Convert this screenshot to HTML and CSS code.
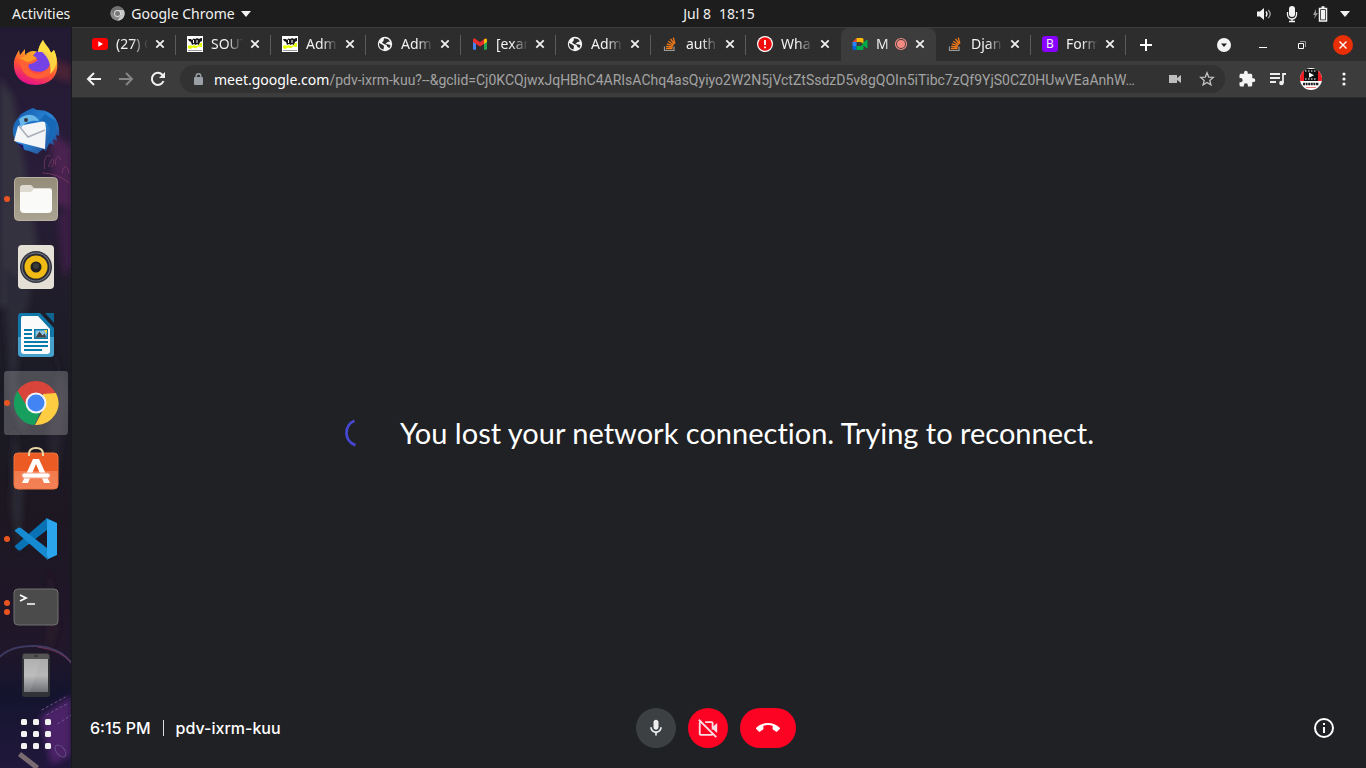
FILE: index.html
```html
<!DOCTYPE html>
<html lang="en">
<head>
<meta charset="utf-8">
<title>Meet - pdv-ixrm-kuu</title>
<link rel="stylesheet" href="styles.css">
</head>
<body>
<svg class="defs" aria-hidden="true">
  <symbol id="close" viewBox="0 0 16 16"><path d="M4.300 4.300l7.400 7.400M11.700 4.300l-7.400 7.400" stroke="#f1f1f1" stroke-width="1.800"/></symbol>
  <symbol id="globe" viewBox="0 0 16 16"><circle cx="8" cy="8" r="7.200" fill="#f4f4f4"/><path d="M2 7l3 1.500L7 10l-.5 3.500C3.500 13 1.800 10.500 2 7zM7 2.200L11 3l2 2.500-2.500.5L8.500 8l3.500.500 1.500 1-1 2.500-2-1-1-2-2.500-1L5 6.500 6.500 5z" fill="#2d2d2d"/></symbol>
  <symbol id="stamp" viewBox="0 0 16 16"><path d="M0 0h16v16H0z" fill="#fff"/><path d="M1 3h3l1 1 1.500-1.500 2 .5 1.500-1 2 1L14 2h1v3l-2 1-1 3-2-1-1 1-2-1-2 1-1-3-2-1z" fill="#181818"/><path d="M6.500 4v3M10 4v3" stroke="#fff"/><path d="M1 10l2-1 2 1 2-1 2 1 3-1 1-2h2v4l-4-.5-2 2-3-1-3 1.500-2-1z" fill="#e6ff00"/><path d="M1 14.500h14" stroke="#999"/></symbol>
  <symbol id="stack" viewBox="0 0 16 16"><path d="M2.500 10.500v4h9.500v-4" fill="none" stroke="#9b9b9b" stroke-width="1.200"/><path d="M4 12.500h6.500M4.200 10.300l6.500.7M4.800 7.800l6.200 1.900M6.200 5.200l5.400 3.600M8.500 3l4 5M11.300 1.700l1.600 6" stroke="#f47b16" stroke-width="1.300"/></symbol>
  <symbol id="mic" viewBox="0 0 24 24"><path d="M12 14c1.660 0 3-1.340 3-3V5c0-1.660-1.340-3-3-3S9 3.340 9 5v6c0 1.660 1.340 3 3 3zm5-3c0 2.760-2.240 5-5 5s-5-2.240-5-5H5c0 3.530 2.610 6.430 6 6.920V21h2v-3.080c3.390-.49 6-3.390 6-6.920h-2z" fill="#eee"/></symbol>
</svg>

<header class="topbar">
  <div class="topbar-left">
    <button class="menu">Activities</button>
    <button class="menu app-menu">
      <svg width="15" height="15" viewBox="0 0 48 48"><circle cx="24" cy="24" r="23" fill="#888"/><path d="M24 13h20a23 23 0 0 1-20 34l10-17z" fill="#c8c8c8"/><path d="M4 13a23 23 0 0 1 40 0H24L14 29z" fill="#707070"/><circle cx="24" cy="24" r="11" fill="#ddd"/><circle cx="24" cy="24" r="8" fill="#777"/></svg>
      Google Chrome
      <svg width="10" height="6"><path d="M0 0h10L5 6z" fill="#f2f2f2"/></svg>
    </button>
  </div>
  <button class="menu clock"><span>Jul 8</span><span>18:15</span></button>
  <button class="menu status" aria-label="System menu">
    <svg width="16" height="16" viewBox="0 0 16 16"><path d="M1 5.500h3L8 2v12l-4-3.500H1z" fill="#f2f2f2"/><path d="M10 5.500q2 2.500 0 5" fill="none" stroke="#f2f2f2" stroke-width="1.300"/><path d="M12.200 3.800q4 4.200 0 8.400" fill="none" stroke="#aaa" stroke-width="1.200"/></svg>
    <svg width="16" height="18" viewBox="0 0 16 18"><rect x="5" y="1" width="6" height="11" rx="3" fill="#f2f2f2"/><path d="M3.500 7v2.500a4.500 4.500 0 0 0 9 0V7M8 14v3M5 16.500h6" fill="none" stroke="#f2f2f2" stroke-width="1.300"/></svg>
    <svg width="16" height="16" viewBox="0 0 16 16"><path d="M4 3L1 9h2l-1 4 4-6H4z" fill="#999"/><path d="M7.500 2.500h7v12.500h-7zM9.500 1h3" fill="none" stroke="#f2f2f2" stroke-width="1.500"/><path d="M9 4h4v9.500H9z" fill="#f2f2f2"/></svg>
    <svg width="10" height="6"><path d="M0 0h10L5 6z" fill="#f2f2f2"/></svg>
  </button>
</header>

<div class="desktop">
  <nav class="dock" aria-label="Applications">
    <svg class="wallpaper" viewBox="0 0 72 741" preserveAspectRatio="xMidYMid slice" aria-hidden="true">
      <defs>
        <linearGradient id="wall" x2="0" y2="1"><stop offset="0" stop-color="#221a33"/><stop offset=".2" stop-color="#291d3a"/><stop offset=".34" stop-color="#211d2b"/><stop offset=".5" stop-color="#1a1b24"/><stop offset=".65" stop-color="#1d1722"/><stop offset=".84" stop-color="#20172a"/><stop offset=".9" stop-color="#14142e"/><stop offset="1" stop-color="#21183c"/></linearGradient>
        <filter id="soft" x="-50%" y="-20%" width="200%" height="140%"><feGaussianBlur stdDeviation="3"/></filter>
      </defs>
      <path d="M0 0h72v741H0z" fill="url(#wall)"/>
      <g filter="url(#soft)">
        <path d="M0 50l14 20 10 60 14 90-10 60H0z" fill="#34323f"/>
        <path d="M46 30l26 8v18l-24-8z" fill="#4a2234"/>
        <path d="M50 104l22 16v64l-16-8z" fill="#492050"/>
        <path d="M58 190l14-10v60l-8 10z" fill="#3b1f45"/>
        <path d="M4 240l26 20-14 90 12 60-16-30z" fill="#2b2b38"/>
        <path d="M40 280l20 60-12 70 8 50 12-90z" fill="#26242f"/>
        <path d="M14 400l10 50-4 80-8-50z" fill="#2b2a34"/>
        <path d="M50 540l8 60-10 30z" fill="#2b1b2a"/>
        <path d="M40 690l32-22v60l-20 10z" fill="#4b2267"/>
      </g>
      <g fill="none">
        <path d="M45 142c-1-12 3-16 6-12M49 140c3-12 8-8 3 0M56 138c-1-10 5-10 5-5M63 146c0-10 7-6 6 0M43 146q14 0 27 10" stroke="#8a4068" stroke-width="1" opacity=".65"/>
        <path d="M0 630q12-12 36-11 24 1 36 17" stroke="#3d3960" stroke-width="2"/>
        <path d="M38 620q24 3 34 16" stroke="#a13d5d" opacity=".6"/>
        <path d="M42 683l24-13M47 688l22-12M58 697l14-9" stroke="#6b558c" stroke-dasharray="3 2"/>
        <ellipse cx="61" cy="724" rx="4" ry="7" transform="rotate(-40 61 724)" stroke="#664c85"/>
        <path d="M20 727l18 14" stroke="#796b70" stroke-width="5"/>
      </g>
    </svg>
    <button class="dock-item" aria-label="Firefox">
      <svg width="48" height="50" viewBox="0 0 48 50"><defs><linearGradient id="ff" x1=".8" y1="0" x2=".4" y2="1"><stop offset="0" stop-color="#fff44f"/><stop offset=".35" stop-color="#ffb02a"/><stop offset=".65" stop-color="#ff562f"/><stop offset="1" stop-color="#e6118a"/></linearGradient></defs><path d="M26 14c1-6 3-9 5-12 2 5 6 7 8 13l3-3c6 14 6 34-18 35C8 47 1 36 2 25c0-5 3-9 5-13l1 5 5-6v6c4-4 8-5 13-3z" fill="url(#ff)"/><path d="M24 14c10-4 19 4 14 14-6 9-22 7-23-3z" fill="#7542e5"/><path d="M7 21c6 1 9-2 14-2l5 3c-3 2-5 4-9 4-3 7 7 13 15 8 8-5 8-15 2-19 9 1 11 10 7 17-7 12-24 11-30 1-2-4-4-8-4-12z" fill="#ff6035"/><path d="M26 14c1-6 3-9 5-12 2 5 6 7 8 13l3-3c5 10 2 19-4 24 2-9-2-17-8-22z" fill="#ffe044" opacity=".9"/><path d="M7 20c5 0 7-4 13-3l5 3c-4 2-6 4-10 4z" fill="#ff9c25"/></svg>
    </button>
    <button class="dock-item" aria-label="Thunderbird">
      <svg width="50" height="50" viewBox="0 0 50 50"><defs><linearGradient id="tb" x2="1" y2="1"><stop offset="0" stop-color="#1456a7"/><stop offset=".5" stop-color="#2985d5"/><stop offset="1" stop-color="#24377a"/></linearGradient></defs><path d="M17 4l5-2 4 2c17-1 24 14 22 26l-3-1 1 6-4-2 1 6-5-2-3 8-3-2-6 5-8-3C6 43-2 28 4 16l6-8z" fill="url(#tb)"/><path d="M7 20l27-5 1 8-1 20L3 35z" fill="#f4f5f7"/><path d="M8 20l9 11 17-7" fill="none" stroke="#aaaeb7" stroke-width="1.500"/><path d="M8 13c10-8 18-3 20 2-8-1-14 1-18 7z" fill="#6ab8e9"/><path d="M28 15c9 0 12 6 10 15l-3 12 9-12 2-14-12-8z" fill="#1769b8"/><circle cx="15" cy="14" r="2" fill="#34383e"/><path d="M5 37l8 7-1-5z" fill="#25125b"/></svg>
    </button>
    <button class="dock-item" aria-label="Files"><i class="run"></i>
      <svg width="46" height="46" viewBox="0 0 46 46"><defs><linearGradient id="fi" x2="0" y2="1"><stop offset="0" stop-color="#948c79"/><stop offset="1" stop-color="#aaa391"/></linearGradient></defs><rect x="1.500" y="1.500" width="43" height="43" rx="4" fill="url(#fi)" stroke="#b8b19f"/><path d="M7 12q0-3 3-3h8l3 3h16q2 0 2 3v6H7z" fill="#dedad2"/><path d="M7 16h11l3-3h15q3 0 3 3v17q0 4-4 4H11q-4 0-4-4z" fill="#fafaf9"/></svg>
    </button>
    <button class="dock-item" aria-label="Rhythmbox">
      <svg width="38" height="46" viewBox="0 0 38 46"><rect x="1" y="1" width="36" height="44" rx="4" fill="#e4e0d6"/><circle cx="19" cy="23" r="16" fill="#343641"/><circle cx="19" cy="23" r="14.500" fill="#747681"/><circle cx="19" cy="23" r="13.500" fill="#292a31"/><circle cx="19" cy="23" r="11.500" fill="#f0bb14"/><circle cx="19" cy="23" r="5.500" fill="#202020"/><circle cx="19" cy="22" r="3" fill="#3a3a3a"/></svg>
    </button>
    <button class="dock-item" aria-label="LibreOffice Writer">
      <svg width="38" height="46" viewBox="0 0 38 46"><path d="M4 1h19l14 15v25q0 4-4 4H5q-4 0-4-4V5q0-4 3-4z" fill="#1176a8"/><path d="M1 25h36v17q0 3-4 3H5q-4 0-4-4z" fill="#45a0cc"/><path d="M28 1h9v10z" fill="#0e638f"/><path d="M5 4h16l12 13v22q0 3-3 3H7q-3 0-3-3V6z" fill="#fafafa"/><path d="M7 18h8M7 22h8M7 26h8M7 30h24M7 34h24M7 38h18" stroke="#087bad" stroke-width="2"/><path d="M17 17h14v10H17z" fill="#0c79a8"/><path d="M18.500 18.500h11v7h-11z" fill="#8ac6e4"/><path d="M18.500 25.500l4-6 3 4 2-2 2 4z" fill="#444"/><path d="M27 18h3v4z" fill="#ffd029"/></svg>
    </button>
    <button class="dock-item current" aria-label="Google Chrome"><i class="run"></i>
      <svg width="46" height="46" viewBox="0 0 46 46"><path d="M4.500 11A22 22 0 0 1 43 14H23l-9 14z" fill="#d9443b"/><path d="M43 13a22 22 0 0 1-21 32l9-17-1-14z" fill="#ffcd41"/><path d="M4.500 11l10 16c3 5 8 6 13 5l-6 13A22 22 0 0 1 4.500 11z" fill="#17a05d"/><circle cx="23" cy="23" r="10.500" fill="#f4f4f4"/><circle cx="23" cy="23" r="8.500" fill="#4384f5"/></svg>
    </button>
    <button class="dock-item" aria-label="Ubuntu Software">
      <svg width="46" height="50" viewBox="0 2 46 50"><defs><linearGradient id="sw" x2="0" y2="1"><stop offset="0" stop-color="#ec5b24"/><stop offset=".5" stop-color="#ec5b24"/><stop offset=".5" stop-color="#f27b4d"/><stop offset="1" stop-color="#f38156"/></linearGradient></defs><rect x="1" y="9" width="44" height="36" rx="4" fill="url(#sw)" stroke="#ed743f"/><path d="M16 12v-2q0-6 7-6t7 6v2" fill="none" stroke="#e9d8a6" stroke-width="2"/><path d="M20 15h6l11 24h-6L23 20l-8 19H9z" fill="#fff"/><rect x="9" y="29" width="28" height="5" rx="2.500" fill="#fff" stroke="#f6a484"/></svg>
    </button>
    <button class="dock-item" aria-label="Visual Studio Code"><i class="run"></i>
      <svg width="44" height="44" viewBox="0 0 44 44"><path d="M2 28l31-27v12L7 33q-2 1-3 0l-3-3q-1-1 1-2z" fill="#0872b5"/><path d="M2 15l31 27V31L7 11q-2-1-3 0l-3 2q-1 1 1 2z" fill="#168bd2"/><path d="M32 1l11 5v32l-11 5q2-1 1-4V4q0-2-1-3z" fill="#2aa5ee"/></svg>
    </button>
    <button class="dock-item" aria-label="Terminal"><i class="run"></i><i class="run"></i>
      <svg width="46" height="38" viewBox="0 0 46 38"><rect x="1" y="1" width="44" height="36" rx="4" fill="#4b4b4b" stroke="#717171"/><path d="M7 7l6 3-6 3" fill="none" stroke="#fff" stroke-width="1.800"/><path d="M14 16h8" stroke="#fff" stroke-width="1.500"/></svg>
    </button>
    <button class="dock-item" aria-label="Phone">
      <svg width="30" height="46" viewBox="0 0 30 46"><defs><linearGradient id="ph" x2="0" y2="1"><stop offset="0" stop-color="#aaa"/><stop offset=".5" stop-color="#b8b8b8"/><stop offset="1" stop-color="#6e6f75"/></linearGradient></defs><rect x="1" y="1" width="28" height="44" rx="3" fill="#303235"/><path d="M2 7V4q0-2 2-2h22q2 0 2 2v3z" fill="#545454"/><path d="M13 4h4" stroke="#222"/><path d="M3 7h24v33H3z" fill="url(#ph)"/><path d="M3 7h17L9 40H3z" fill="#fff" opacity=".08"/></svg>
    </button>
    <button class="dock-item show-apps" aria-label="Show Applications">
      <svg width="30" height="30" viewBox="0 0 30 30" fill="#f3f3f1"><rect width="6" height="6" rx="1.500"/><rect x="12" width="6" height="6" rx="1.500"/><rect x="24" width="6" height="6" rx="1.500"/><rect y="12" width="6" height="6" rx="1.500"/><rect x="12" y="12" width="6" height="6" rx="1.500"/><rect x="24" y="12" width="6" height="6" rx="1.500"/><rect y="24" width="6" height="6" rx="1.500"/><rect x="12" y="24" width="6" height="6" rx="1.500"/><rect x="24" y="24" width="6" height="6" rx="1.500"/></svg>
    </button>
  </nav>

  <div class="browser">
    <div class="tabstrip">
      <div class="tabs">
        <div class="tab"><svg class="fav" viewBox="0 0 16 16"><rect y="2" width="16" height="12" rx="3" fill="#f00"/><path d="M6.300 5.300L11 8l-4.700 2.700z" fill="#fff"/></svg><span class="title">(27) C</span><button class="x" aria-label="Close tab"><svg><use href="#close"/></svg></button></div>
        <div class="tab"><svg class="fav"><use href="#stamp"/></svg><span class="title">SOUT</span><button class="x" aria-label="Close tab"><svg><use href="#close"/></svg></button></div>
        <div class="tab"><svg class="fav"><use href="#stamp"/></svg><span class="title">Adm</span><button class="x" aria-label="Close tab"><svg><use href="#close"/></svg></button></div>
        <div class="tab"><svg class="fav"><use href="#globe"/></svg><span class="title">Adm</span><button class="x" aria-label="Close tab"><svg><use href="#close"/></svg></button></div>
        <div class="tab"><svg class="fav" viewBox="0 0 16 16"><path d="M1 3.500V13q0 .7.700.7h2.300V7z" fill="#4285f4"/><path d="M12 7v6.700h2.300q.7 0 .7-.7V3.500z" fill="#28a852"/><path d="M1 4q0-2.500 2.300-1.300L8 6.300l4.700-3.600Q13 2.500 14 3l-2 5-4 2.600L4 8 1 6z" fill="#e92c2c"/><path d="M12 3.500q3-2.500 3 .8V6l-3 2z" fill="#fbbc04"/></svg><span class="title">[exar</span><button class="x" aria-label="Close tab"><svg><use href="#close"/></svg></button></div>
        <div class="tab"><svg class="fav"><use href="#globe"/></svg><span class="title">Adm</span><button class="x" aria-label="Close tab"><svg><use href="#close"/></svg></button></div>
        <div class="tab"><svg class="fav"><use href="#stack"/></svg><span class="title">auth</span><button class="x" aria-label="Close tab"><svg><use href="#close"/></svg></button></div>
        <div class="tab"><svg class="fav" viewBox="0 0 16 16"><circle cx="8" cy="8" r="8" fill="#fff"/><circle cx="8" cy="8" r="6.800" fill="#f00c0c"/><path d="M8 4v5M8 10.500v1.800" stroke="#fff" stroke-width="1.800"/></svg><span class="title">Wha</span><button class="x" aria-label="Close tab"><svg><use href="#close"/></svg></button></div>
        <div class="tab active"><svg class="fav" viewBox="0 0 16 16"><path d="M4.500 2v4H.5z" fill="#ea4335"/><path d="M.5 6h4v4h-4z" fill="#2684fc"/><path d="M.5 10h4v4H2q-1.500 0-1.500-1.500z" fill="#0066da"/><path d="M4.500 2H10q1.500 0 1.500 1.500V8L9 6H4.500z" fill="#ffba00"/><path d="M4.500 10H9l2.500-2v4.500Q11.500 14 10 14H4.500z" fill="#00ac47"/><path d="M10 8l4.300-4q1.200-.7 1.200.5v7q0 1.200-1.200.5z" fill="#00ac47"/></svg><span class="title">M</span><svg class="rec" viewBox="0 0 14 14"><circle cx="7" cy="7" r="5.500" fill="none" stroke="#f28b82" stroke-width="1.200"/><circle cx="7" cy="7" r="4" fill="#f28b82"/></svg><button class="x" aria-label="Close tab"><svg><use href="#close"/></svg></button></div>
        <div class="tab"><svg class="fav"><use href="#stack"/></svg><span class="title">Djan</span><button class="x" aria-label="Close tab"><svg><use href="#close"/></svg></button></div>
        <div class="tab"><span class="fav bootstrap">B</span><span class="title">Form</span><button class="x" aria-label="Close tab"><svg><use href="#close"/></svg></button></div>
      </div>
      <button class="icon-btn new-tab" aria-label="New tab"><svg width="14" height="14"><path d="M7 1v12M1 7h12" stroke="#fff" stroke-width="2"/></svg></button>
      <div class="window-controls">
        <button class="icon-btn" aria-label="Search tabs"><svg width="14" height="14"><circle cx="7" cy="7" r="7" fill="#f4f4f4"/><path d="M4 5.500h6L7 9z" fill="#222"/></svg></button>
        <button class="icon-btn" aria-label="Minimize"><svg width="14" height="14"><path d="M3 9.500h8" stroke="#fff"/></svg></button>
        <button class="icon-btn" aria-label="Restore"><svg width="14" height="14"><path d="M3.500 5.500h5v5h-5z" fill="none" stroke="#fff"/><path d="M5 3.500h5.500V9" fill="none" stroke="#999"/></svg></button>
        <button class="icon-btn" aria-label="Close window"><svg width="20" height="20"><circle cx="10" cy="10" r="10" fill="#e92f05"/><path d="M6.500 6.500l7 7M13.500 6.500l-7 7" stroke="#fff" stroke-width="1.400"/></svg></button>
      </div>
    </div>

    <div class="toolbar">
      <button class="icon-btn" aria-label="Back"><svg width="16" height="16"><path d="M15 8H2M8 2L2 8l6 6" fill="none" stroke="#f1f1f1" stroke-width="2"/></svg></button>
      <button class="icon-btn" aria-label="Forward"><svg width="16" height="16"><path d="M1 8h13M8 2l6 6-6 6" fill="none" stroke="#858585" stroke-width="2"/></svg></button>
      <button class="icon-btn" aria-label="Reload"><svg width="16" height="16"><path d="M13.500 10A6 6 0 1 1 12.300 3.800L14 5.500" fill="none" stroke="#f1f1f1" stroke-width="2"/><path d="M15 1v6H9z" fill="#f1f1f1"/></svg></button>
      <div class="omnibox">
        <svg width="10" height="12"><rect y="4" width="9" height="8" rx="1" fill="#9aa0a6"/><path d="M2.200 5V3a2.300 2.300 0 0 1 4.600 0v2" fill="none" stroke="#9aa0a6" stroke-width="1.400"/></svg>
        <div class="address"><label for="url">meet.google.com</label><input id="url" type="text" spellcheck="false" value="/pdv-ixrm-kuu?--&amp;gclid=Cj0KCQjwxJqHBhC4ARIsAChq4asQyiyo2W2N5jVctZtSsdzD5v8gQOIn5iTibc7zQf9YjS0CZ0HUwVEaAnhW…"></div>
        <button class="icon-btn" aria-label="Camera in use"><svg width="14" height="14"><path d="M1 3h8v3l4-3v8l-4-3v3H1z" fill="#bdbdbd"/></svg></button>
        <button class="icon-btn" aria-label="Bookmark this page"><svg width="16" height="16" viewBox="0 0 16 16"><path d="M8 1.800l1.700 4.300 4.600.3-3.500 3 1.100 4.500L8 11.400l-3.900 2.500 1.100-4.500-3.500-3 4.600-.3z" fill="none" stroke="#c4c4c4" stroke-width="1.300"/></svg></button>
      </div>
      <div class="extensions">
        <button class="icon-btn" aria-label="Extensions"><svg width="18" height="18" viewBox="0 0 24 24"><path d="M20.500 11H19V7c0-1.100-.9-2-2-2h-4V3.500a2.500 2.500 0 0 0-5 0V5H4c-1.100 0-2 .9-2 2v3.800h1.500a2.700 2.700 0 0 1 0 5.400H2V20c0 1.100.9 2 2 2h3.800v-1.500a2.700 2.700 0 0 1 5.400 0V22H17c1.100 0 2-.9 2-2v-4h1.500a2.500 2.500 0 0 0 0-5z" fill="#f4f4f4"/></svg></button>
        <button class="icon-btn" aria-label="Media controls"><svg width="16" height="14"><path d="M0 2h10M0 6h10M0 10h6M13 11V2h3" fill="none" stroke="#ededed" stroke-width="1.800"/><circle cx="11.500" cy="11" r="2.300" fill="#ededed"/></svg></button>
        <button class="icon-btn" aria-label="Profile"><svg width="22" height="22" viewBox="0 0 22 22"><defs><clipPath id="av"><circle cx="11" cy="11" r="11"/></clipPath></defs><g clip-path="url(#av)"><path d="M0 0h22v22H0z" fill="#fff"/><path d="M0 3h4v10H0zM18 3h4v10h-4z" fill="#ed1c24"/><path d="M4 1h14v12H4z" fill="#111"/><path d="M5 3h12M5 11h12" stroke="#fff" stroke-dasharray="1.500 1.500"/><path d="M9 4.500l5 2.700-5 2.600z" fill="#fff"/><path d="M3 16h16" stroke="#222" stroke-width="2.500" stroke-dasharray="2 .6"/><path d="M6 19.500h10" stroke="#ee7777"/></g></svg></button>
        <button class="icon-btn" aria-label="Menu"><svg width="4" height="16" fill="#f4f4f4"><circle cx="2" cy="3" r="1.600"/><circle cx="2" cy="8" r="1.600"/><circle cx="2" cy="13" r="1.600"/></svg></button>
      </div>
    </div>

    <main class="meet">
      <div class="message" role="status">
        <svg class="spinner" viewBox="0 0 28 28"><path d="M10.500 1.800A13 13 0 0 0 11.500 26.200" fill="none" stroke="#4647d3" stroke-width="2.800"/></svg>
        <h1>You lost your network connection. Trying to reconnect.</h1>
      </div>
      <footer class="callbar">
        <div class="details"><span>6:15 PM</span><span class="bar"></span><span>pdv-ixrm-kuu</span></div>
        <div class="controls">
          <button class="round" aria-label="Mute microphone"><svg width="20" height="20"><use href="#mic"/></svg></button>
          <button class="round red" aria-label="Turn on camera"><svg width="22" height="22" viewBox="0 0 24 24"><path d="M5 5.500H4q-1 0-1 1v12q0 1 1 1h12q1 0 1-1v-1M9 5.500h7q1 0 1 1v7" fill="none" stroke="#f7dfe3" stroke-width="2"/><path d="M17 11l5-4.500v11L17 13z" fill="#f7dfe3"/><path d="M2 3l19 19" stroke="#f7dfe3" stroke-width="2"/></svg></button>
          <button class="round red leave" aria-label="Leave call"><svg width="24" height="24" viewBox="0 0 24 24"><path d="M12 9c-1.600 0-3.150.25-4.600.72v3.100c0 .39-.23.74-.56.900-.98.490-1.870 1.120-2.660 1.850-.18.180-.430.280-.7.280-.28 0-.53-.11-.71-.290L.29 13.080a.99.990 0 0 1 0-1.410C3.340 8.780 7.460 7 12 7s8.660 1.780 11.710 4.670c.39.390.39 1.020 0 1.410l-2.480 2.480c-.18.180-.43.290-.71.290-.27 0-.52-.1-.7-.28a11.300 11.300 0 0 0-2.660-1.850.99.990 0 0 1-.56-.9v-3.100A15 15 0 0 0 12 9z" fill="#fff"/></svg></button>
        </div>
        <button class="info" aria-label="Meeting details"><svg width="20" height="20"><circle cx="10" cy="10" r="9" fill="none" stroke="#fff" stroke-width="2"/><path d="M10 9v6M10 5v2" stroke="#fff" stroke-width="2"/></svg></button>
      </footer>
    </main>
  </div>
</div>
</body>
</html>
```
FILE: styles.css
```css
* {
  box-sizing: border-box;
}

body {
  margin: 0;
  height: 100vh;
  display: flex;
  flex-direction: column;
  overflow: hidden;
  background: #202124;
  color: #f2f2f2;
  font-family: "Noto Sans", "Open Sans", sans-serif;
  font-size: 14px;
}

button {
  display: flex;
  align-items: center;
  justify-content: center;
  padding: 0;
  border: 0;
  background: none;
  color: inherit;
  font: inherit;
}

svg {
  display: block;
  flex: none;
}

.defs {
  position: absolute;
  width: 0;
  height: 0;
}

/* Desktop bar */
.topbar {
  flex: none;
  height: 27px;
  display: grid;
  grid-template-columns: 1fr auto 1fr;
  align-items: center;
  padding: 0 16px 0 12px;
  background: #1d1d1d;
}

.topbar-left {
  display: flex;
  gap: 40px;
}

.menu {
  white-space: nowrap;
}

.app-menu {
  gap: 6px;
}

.clock {
  gap: 8px;
  padding-left: 76px;
}

.status {
  justify-self: end;
  gap: 12px;
}

.desktop {
  flex: 1;
  min-height: 0;
  display: flex;
}

/* Dock */
.dock {
  flex: none;
  width: 72px;
  display: flex;
  flex-direction: column;
  align-items: center;
  gap: 4px;
  padding-top: 4px;
  position: relative;
  overflow: hidden;
  border-right: 1px solid #18191c;
}

.wallpaper {
  position: absolute;
  inset: 0;
  width: 100%;
  height: 100%;
}

.dock-item {
  position: relative;
  flex: none;
  width: 64px;
  height: 64px;
  border-radius: 3px;
}

.current {
  background: rgba(255, 255, 255, 0.22);
}

.show-apps {
  height: 46px;
}

.run {
  position: absolute;
  left: 0;
  top: 29px;
  width: 6px;
  height: 6px;
  border-radius: 50%;
  background: #e95420;
}

.run:has(+ .run) {
  top: 25px;
}

.run + .run {
  top: 34px;
}

/* Browser window */
.browser {
  flex: 1;
  min-width: 0;
  display: flex;
  flex-direction: column;
}

.tabstrip {
  flex: none;
  height: 34px;
  display: flex;
  align-items: stretch;
  padding: 0 13px 0 9px;
  background: #2d2d2d;
  border-top: 1px solid #3c3c3c;
}

.tabs {
  display: flex;
  min-width: 0;
}

.tab {
  width: 95px;
  display: flex;
  align-items: center;
  padding: 0 8px 2px 11px;
  background: linear-gradient(#5c5c5c, #5c5c5c) right center / 1px 20px no-repeat;
}

.tab:has(+ .active) {
  background: none;
}

.tab.active {
  background: #3c3c3c;
  border-radius: 8px 8px 0 0;
}

.fav {
  flex: none;
  width: 16px;
  height: 16px;
}

.bootstrap {
  display: flex;
  align-items: center;
  justify-content: center;
  border-radius: 3px;
  background: #8a00ff;
  font-size: 12px;
}

.title {
  flex: 1;
  min-width: 0;
  margin-left: 8px;
  overflow: hidden;
  white-space: nowrap;
  -webkit-mask-image: linear-gradient(to right, #000 50%, transparent);
  mask-image: linear-gradient(to right, #000 50%, transparent);
}

.x {
  flex: none;
  margin-left: 4px;
}

.x svg {
  width: 16px;
  height: 16px;
}

.rec {
  width: 14px;
  height: 14px;
}

.icon-btn {
  flex: none;
  min-width: 16px;
}

.new-tab {
  width: 40px;
}

.window-controls {
  display: flex;
  align-items: center;
  gap: 23px;
  margin-left: auto;
}

.toolbar {
  flex: none;
  height: 37px;
  display: flex;
  align-items: center;
  gap: 16px;
  padding: 0 14px;
  background: #3c3c3c;
  border-bottom: 1px solid #2b2b2b;
}

.omnibox {
  flex: 1;
  min-width: 0;
  height: 28px;
  display: flex;
  align-items: center;
  gap: 16px;
  margin: 0 -3px 0 -2px;
  padding: 0 10px 0 14px;
  border-radius: 14px;
  background: #323232;
}

.address {
  flex: 1;
  min-width: 0;
  display: flex;
  align-items: baseline;
  margin-left: -6px;
}

.address label {
  color: #fff;
}

.address input {
  flex: 1;
  min-width: 0;
  padding: 0;
  border: 0;
  outline: 0;
  background: none;
  color: #a3a3a3;
  font-family: Roboto, sans-serif;
  font-size: 14px;
  text-overflow: ellipsis;
}

.extensions {
  display: flex;
  align-items: center;
  gap: 14px;
}

/* Call page */
.meet {
  flex: 1;
  min-height: 0;
  display: flex;
  flex-direction: column;
  padding-top: 80px;
  background: #202124;
}

.message {
  flex: 1;
  display: flex;
  align-items: center;
  justify-content: center;
  gap: 28px;
}

.spinner {
  width: 28px;
  height: 28px;
}

.message h1 {
  margin: 0;
  color: #fff;
  font-family: Lato, Roboto, sans-serif;
  font-size: 29px;
  font-weight: 400;
  font-variant-ligatures: none;
  line-height: 36px;
}

.callbar {
  flex: none;
  height: 80px;
  display: grid;
  grid-template-columns: 1fr auto 1fr;
  align-items: center;
  padding: 0 24px 0 18px;
}

.details {
  display: flex;
  align-items: center;
  gap: 12px;
  color: #fff;
  font-family: Inter, Roboto, sans-serif;
  font-size: 16px;
  font-weight: 500;
}

.bar {
  width: 1px;
  height: 16px;
  background: #dadce0;
}

.controls {
  display: flex;
  gap: 12px;
}

.round {
  width: 40px;
  height: 40px;
  border-radius: 20px;
  background: #3c4043;
}

.red {
  background: #fc0324;
}

.leave {
  width: 56px;
}

.info {
  justify-self: end;
  width: 36px;
  height: 36px;
}
```
